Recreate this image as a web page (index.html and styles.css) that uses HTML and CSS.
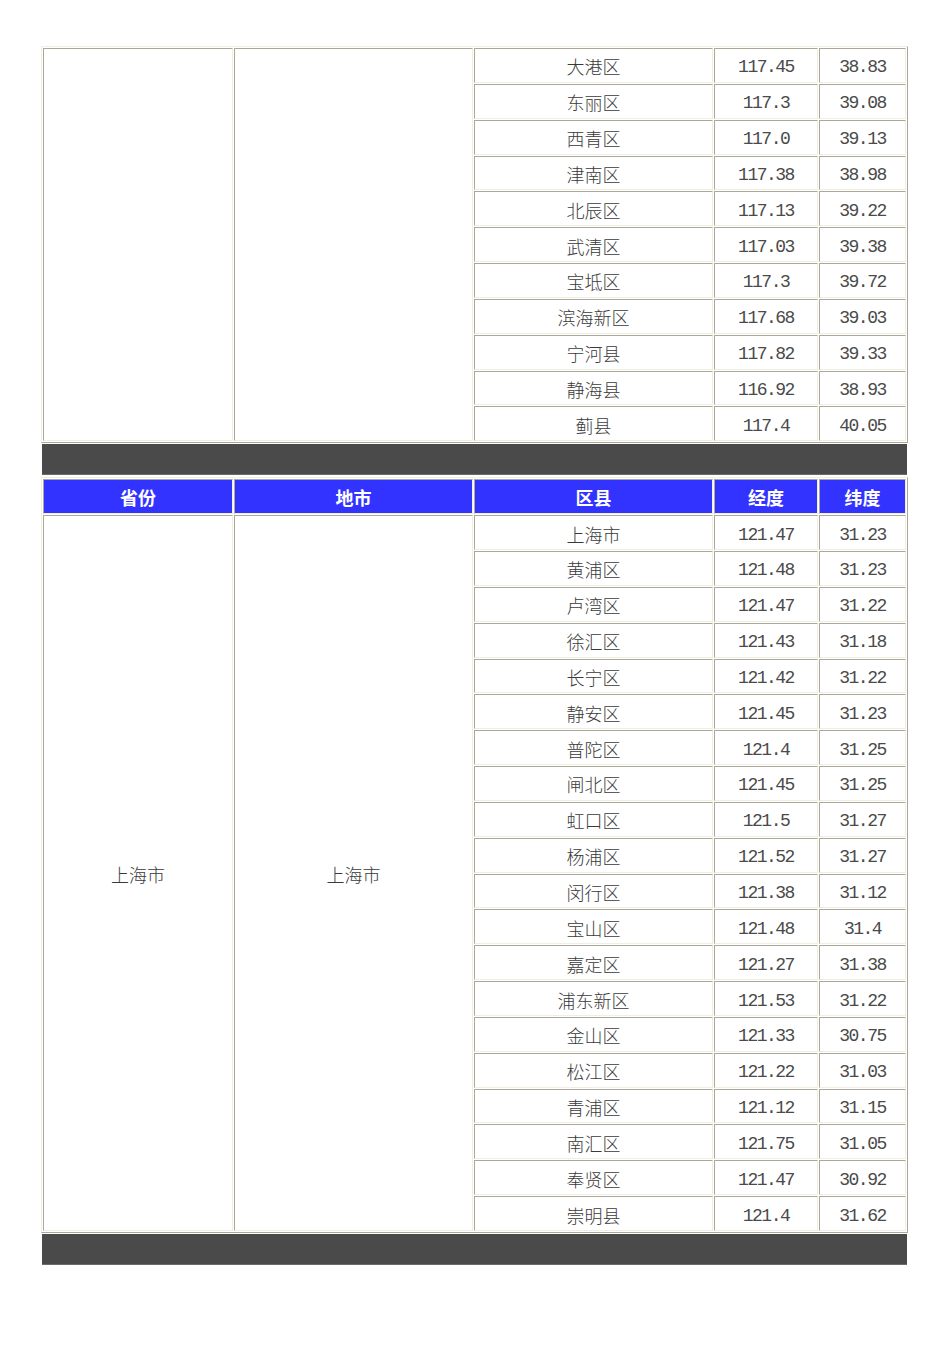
FILE: index.html
```html
<!DOCTYPE html>
<html lang="zh-CN">
<head>
<meta charset="utf-8">
<title>省份 地市 区县 经纬度</title>
<link rel="stylesheet" href="styles.css">
</head>
<body>
<div class="page">
  <table class="geo">
    <colgroup>
      <col class="c1"><col class="c2"><col class="c3"><col class="c4"><col class="c5">
    </colgroup>
    <tbody>
      <tr><td rowspan="11"></td><td rowspan="11"></td><td class="zh">大港区</td><td class="num">117.45</td><td class="num">38.83</td></tr>
      <tr><td class="zh">东丽区</td><td class="num">117.3</td><td class="num">39.08</td></tr>
      <tr><td class="zh">西青区</td><td class="num">117.0</td><td class="num">39.13</td></tr>
      <tr><td class="zh">津南区</td><td class="num">117.38</td><td class="num">38.98</td></tr>
      <tr><td class="zh">北辰区</td><td class="num">117.13</td><td class="num">39.22</td></tr>
      <tr><td class="zh">武清区</td><td class="num">117.03</td><td class="num">39.38</td></tr>
      <tr><td class="zh">宝坻区</td><td class="num">117.3</td><td class="num">39.72</td></tr>
      <tr><td class="zh">滨海新区</td><td class="num">117.68</td><td class="num">39.03</td></tr>
      <tr><td class="zh">宁河县</td><td class="num">117.82</td><td class="num">39.33</td></tr>
      <tr><td class="zh">静海县</td><td class="num">116.92</td><td class="num">38.93</td></tr>
      <tr><td class="zh">蓟县</td><td class="num">117.4</td><td class="num">40.05</td></tr>
    </tbody>
  </table>
  <div class="bar"></div>
  <table class="geo">
    <colgroup>
      <col class="c1"><col class="c2"><col class="c3"><col class="c4"><col class="c5">
    </colgroup>
    <thead>
      <tr><th>省份</th><th>地市</th><th>区县</th><th>经度</th><th>纬度</th></tr>
    </thead>
    <tbody>
      <tr><td rowspan="20" class="zh">上海市</td><td rowspan="20" class="zh">上海市</td><td class="zh">上海市</td><td class="num">121.47</td><td class="num">31.23</td></tr>
      <tr><td class="zh">黄浦区</td><td class="num">121.48</td><td class="num">31.23</td></tr>
      <tr><td class="zh">卢湾区</td><td class="num">121.47</td><td class="num">31.22</td></tr>
      <tr><td class="zh">徐汇区</td><td class="num">121.43</td><td class="num">31.18</td></tr>
      <tr><td class="zh">长宁区</td><td class="num">121.42</td><td class="num">31.22</td></tr>
      <tr><td class="zh">静安区</td><td class="num">121.45</td><td class="num">31.23</td></tr>
      <tr><td class="zh">普陀区</td><td class="num">121.4</td><td class="num">31.25</td></tr>
      <tr><td class="zh">闸北区</td><td class="num">121.45</td><td class="num">31.25</td></tr>
      <tr><td class="zh">虹口区</td><td class="num">121.5</td><td class="num">31.27</td></tr>
      <tr><td class="zh">杨浦区</td><td class="num">121.52</td><td class="num">31.27</td></tr>
      <tr><td class="zh">闵行区</td><td class="num">121.38</td><td class="num">31.12</td></tr>
      <tr><td class="zh">宝山区</td><td class="num">121.48</td><td class="num">31.4</td></tr>
      <tr><td class="zh">嘉定区</td><td class="num">121.27</td><td class="num">31.38</td></tr>
      <tr><td class="zh">浦东新区</td><td class="num">121.53</td><td class="num">31.22</td></tr>
      <tr><td class="zh">金山区</td><td class="num">121.33</td><td class="num">30.75</td></tr>
      <tr><td class="zh">松江区</td><td class="num">121.22</td><td class="num">31.03</td></tr>
      <tr><td class="zh">青浦区</td><td class="num">121.12</td><td class="num">31.15</td></tr>
      <tr><td class="zh">南汇区</td><td class="num">121.75</td><td class="num">31.05</td></tr>
      <tr><td class="zh">奉贤区</td><td class="num">121.47</td><td class="num">30.92</td></tr>
      <tr><td class="zh">崇明县</td><td class="num">121.4</td><td class="num">31.62</td></tr>
    </tbody>
  </table>
  <div class="bar"></div>
</div>
</body>
</html>
```
FILE: styles.css
```css
html, body {
  margin: 0;
  padding: 0;
  background: #ffffff;
}

.page {
  padding: 46px 0 0 41px;
  width: 867px;
}

.geo {
  width: 867px;
  table-layout: fixed;
  border-collapse: separate;
  border-spacing: 1px;
  border-style: solid;
  border-width: 1px;
  border-color: #f1efe2 #aca899 #aca899 #f1efe2;
  background: #ffffff;
}

.c1 { width: 190px; }
.c2 { width: 239px; }
.c3 { width: 239px; }
.c4 { width: 104px; }
.c5 { width: 87px; }

.geo td,
.geo th {
  height: 32.85px;
  padding: 0;
  border-style: solid;
  border-width: 1px;
  border-color: #aca899 #f1efe2 #f1efe2 #aca899;
  text-align: center;
  vertical-align: middle;
  color: #333333;
  box-sizing: content-box;
  line-height: 20px;
}

.geo td.zh {
  font-family: "Noto Sans CJK SC", sans-serif;
  font-size: 18px;
  font-weight: 300;
  color: #3a3a3a;
  padding-top: 2px;
  height: 30.85px;
}

.geo td.num {
  font-family: "Liberation Mono", monospace;
  font-size: 18px;
  letter-spacing: -1.5px;
  color: #4a4a4a;
  padding-top: 4px;
  height: 28.85px;
}

.geo th {
  background: #3333ff;
  color: #ffffff;
  font-family: "Noto Sans CJK SC", sans-serif;
  font-size: 18px;
  font-weight: 700;
}

.bar {
  margin: 1px 0 2px 1px;
  width: 865px;
  height: 30px;
  background: #4a4a4a;
  border-bottom: 1px solid #6b6b6b;
}
```
